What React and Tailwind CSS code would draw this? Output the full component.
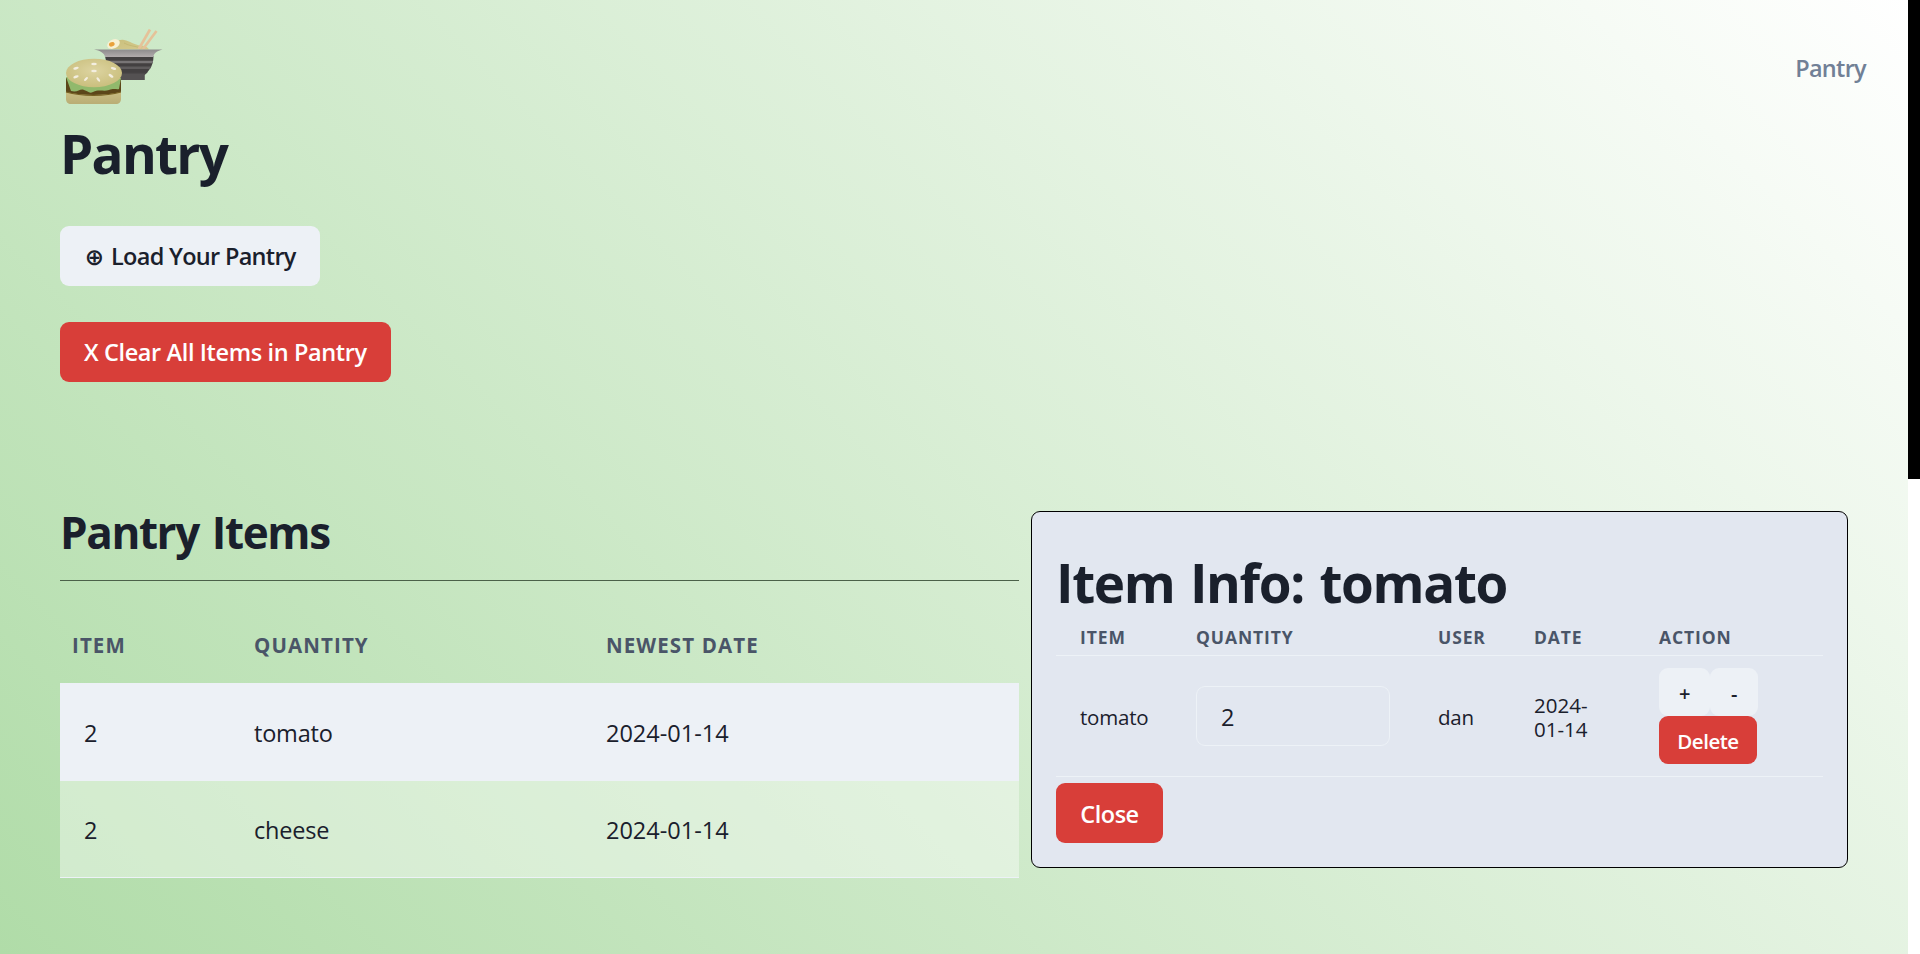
import React from "react";

function Logo() {
  return (
    <svg width="120" height="84" viewBox="0 0 120 84" className="block">
      <defs>
        <linearGradient id="rim" x1="0" y1="0" x2="0" y2="1">
          <stop offset="0" stopColor="#8d8b8c" />
          <stop offset="1" stopColor="#b1abac" />
        </linearGradient>
        <radialGradient id="bun" cx="0.5" cy="0.42" r="0.6">
          <stop offset="0" stopColor="#ddd4a1" />
          <stop offset="1" stopColor="#c9be7c" />
        </radialGradient>
        <linearGradient id="base" x1="0" y1="0" x2="0" y2="1">
          <stop offset="0" stopColor="#c9bd82" />
          <stop offset="1" stopColor="#b9ad75" />
        </linearGradient>
        <linearGradient id="noodle" x1="0" y1="0" x2="1" y2="1">
          <stop offset="0" stopColor="#c9bf7c" />
          <stop offset="1" stopColor="#d5ca8d" />
        </linearGradient>
        <clipPath id="bowl">
          <path d="M55 27H103.500C103.500 37 99 42 94.500 46V51H60Z" />
        </clipPath>
      </defs>
      <path d="M60 20C62 14 68 10 74 11C80 12 84 16 91 16.500C95 17 98 18 99 20.500Z" fill="url(#noodle)" />
      <path d="M74 14C79 17 85 17 91 19" stroke="#c2b570" strokeWidth="0.800" fill="none" />
      <ellipse cx="63.500" cy="15" rx="6.600" ry="4.500" transform="rotate(-24 63.500 15)" fill="#f7f1d3" />
      <ellipse cx="61.800" cy="15.300" rx="2.900" ry="2.200" transform="rotate(-20 61.800 15.300)" fill="#e9a13b" />
      <path d="M88.800 20L100 0.500" stroke="#e5c299" strokeWidth="2.700" />
      <path d="M93 20L106.500 2" stroke="#e5c299" strokeWidth="2.700" />
      <g clipPath="url(#bowl)">
        <path d="M50 27H110V52H50Z" fill="#434041" />
        <path d="M50 31.700H110V34.300H50Z" fill="#787576" />
        <path d="M50 37.500H110V40H50Z" fill="#5f5c5d" />
        <path d="M50 43H110V51H50Z" fill="#545152" />
        <path d="M50 43H110V44.500H50Z" fill="#454243" />
      </g>
      <path d="M44 20.500H112.500C106 22 103.500 25 103.500 28H55C54.500 24 50 21.500 44 20.500Z" fill="url(#rim)" />
      <path d="M16 49H71V62C71 64 69 66 44 67C20 66 16 65 16 62Z" fill="#5c4619" />
      <path d="M16 63C32 67 55 67 71 63V70C71 73 69 75 66 75H21C18 75 16 73 16 70Z" fill="url(#base)" />
      <path d="M16 63C32 67.500 55 67.500 71 63" fill="none" stroke="#756022" strokeWidth="1.200" />
      <path d="M16 48L21 62C28 64 30 59 34 61C38 62 39 65 43 63C49 60 54 63 59 61C64 59 67 61 69 60L71 49Z" fill="#91b96c" />
      <ellipse cx="44" cy="44" rx="28" ry="14.300" fill="url(#bun)" />
      <g fill="#f3eee0">
        <ellipse cx="44" cy="35" rx="2.800" ry="1.300" />
        <ellipse cx="44" cy="42" rx="2.800" ry="1.200" />
        <ellipse cx="26" cy="39.200" rx="2.800" ry="1.300" transform="rotate(-15 26 39.200)" />
        <ellipse cx="63.500" cy="39.500" rx="2.800" ry="1.300" transform="rotate(15 63.500 39.500)" />
        <ellipse cx="26" cy="47.800" rx="2.800" ry="1.300" transform="rotate(-20 26 47.800)" />
        <ellipse cx="61" cy="46.800" rx="2.800" ry="1.300" transform="rotate(32 61 46.800)" />
        <ellipse cx="36" cy="50" rx="2.500" ry="1.200" transform="rotate(-45 36 50)" />
        <ellipse cx="48.300" cy="50.500" rx="2.500" ry="1.200" transform="rotate(50 48.300 50.500)" />
      </g>
    </svg>
  );
}

const rows = [
  { qty: "2", name: "tomato", date: "2024-01-14", bg: "h-[98px] bg-[#edf1f6]" },
  { qty: "2", name: "cheese", date: "2024-01-14", bg: "h-[97px] border-b border-[#edf2f7] bg-white/40" },
];

export default function App() {
  return (
    <div className="flex h-[954px] w-full overflow-hidden font-['Open_Sans','Noto_Sans',sans-serif] text-[#1a202c]">
      <div className="flex h-full w-[1908px] flex-col bg-[linear-gradient(45deg,#b0dca8,#ffffff)] px-[60px]">
        <header className="flex h-[126px] shrink-0 items-start justify-between pt-[29px]">
          <div className="-ml-[10px]">
            <Logo />
          </div>
          <a className="-mr-[18px] mt-[21px] text-[23.500px] font-semibold leading-[36px] tracking-[-0.7px] text-[#718096]">Pantry</a>
        </header>
        <h1 className="h-[100px] shrink-0 text-[53px] font-bold leading-[56px] tracking-[-1.7px]">Pantry</h1>
        <button className="flex h-[60px] w-[260px] shrink-0 items-center whitespace-nowrap rounded-[9px] bg-[#edf1f6] pl-6 pt-[2px] text-[23.500px] font-semibold tracking-[-0.7px]">
          <span className="mr-[6px] w-[21px] font-['DejaVu_Sans'] text-[23px] font-bold tracking-normal">⊕</span>
          <span>Load Your Pantry</span>
        </button>
        <button className="mt-9 flex h-[60px] w-[331px] shrink-0 items-center whitespace-nowrap rounded-[9px] bg-[#d83e39] pl-6 pt-[2px] text-[23.500px] font-semibold tracking-[-0.380px] text-white">
          X Clear All Items in Pantry
        </button>

        <main className="mt-[129px] flex items-start">
          <section className="w-[959px] shrink-0">
            <h2 className="h-[70px] border-b border-[#4b6149] text-[44px] font-bold leading-[42px] tracking-[-1.4px] [word-spacing:3px]">Pantry Items</h2>
            <div className="flex h-[102px] pt-[51px] text-[20.500px] font-bold uppercase leading-[26px] tracking-[1.1px] text-[#4a5568]">
              <div className="w-[194px] pl-3">Item</div>
              <div className="w-[352px]">Quantity</div>
              <div>Newest Date</div>
            </div>
            {rows.map((r) => (
              <div key={r.name} className={"flex items-center pt-1 text-[23.500px] tracking-[-0.2px] " + r.bg}>
                <div className="w-[194px] pl-6">{r.qty}</div>
                <div className="w-[352px]">{r.name}</div>
                <div className="tracking-[0px]">{r.date}</div>
              </div>
            ))}
          </section>

          <section className="ml-3 h-[357px] w-[817px] shrink-0 rounded-[9px] border border-black bg-[#e2e7f0] px-6">
            <h1 className="mt-[42px] h-[61px] whitespace-nowrap text-[53px] font-bold leading-[57px] tracking-[-1.350px] [word-spacing:3px]">Item Info: tomato</h1>
            <div className="flex h-[41px] items-center border-b border-[#edf2f7] pt-1 text-[17.500px] font-bold uppercase leading-6 tracking-[0.9px] text-[#4a5568]">
              <div className="w-[140px] pl-6">Item</div>
              <div className="w-[242px]">Quantity</div>
              <div className="w-[96px]">User</div>
              <div className="w-[125px]">Date</div>
              <div>Action</div>
            </div>
            <div className="flex h-[121px] items-center border-b border-[#edf2f7] text-[20.500px] tracking-[-0.2px]">
              <div className="w-[140px] pl-6 pt-[2px]">tomato</div>
              <div className="w-[242px]">
                <div className="flex h-[60px] w-[194px] items-center rounded-[9px] border border-[#edf2f7] pl-6 pt-[3px] text-[23.500px]">2</div>
              </div>
              <div className="w-[96px] pt-[2px]">dan</div>
              <div className="w-[125px] pt-[2px] leading-6 tracking-[0px]">
                2024-
                <br />
                01-14
              </div>
              <div className="w-[99px] font-semibold">
                <div className="flex">
                  <button className="h-12 w-[51px] rounded-[9px] bg-[#edf1f6] pt-1 text-[20px]">+</button>
                  <button className="h-12 w-12 rounded-[9px] bg-[#edf1f6] pt-1 text-[20px]">-</button>
                </div>
                <button className="h-12 w-[98px] rounded-[9px] bg-[#d83e39] pt-[2px] text-[20.500px] tracking-[-0.5px] text-white">Delete</button>
              </div>
            </div>
            <button className="mt-[6px] h-[60px] w-[107px] rounded-[9px] bg-[#d83e39] pt-[3px] text-[23.500px] font-semibold tracking-[-0.5px] text-white">Close</button>
          </section>
        </main>
      </div>
      <div className="h-full w-3 bg-white">
        <div className="h-[479px] bg-black" />
      </div>
    </div>
  );
}
